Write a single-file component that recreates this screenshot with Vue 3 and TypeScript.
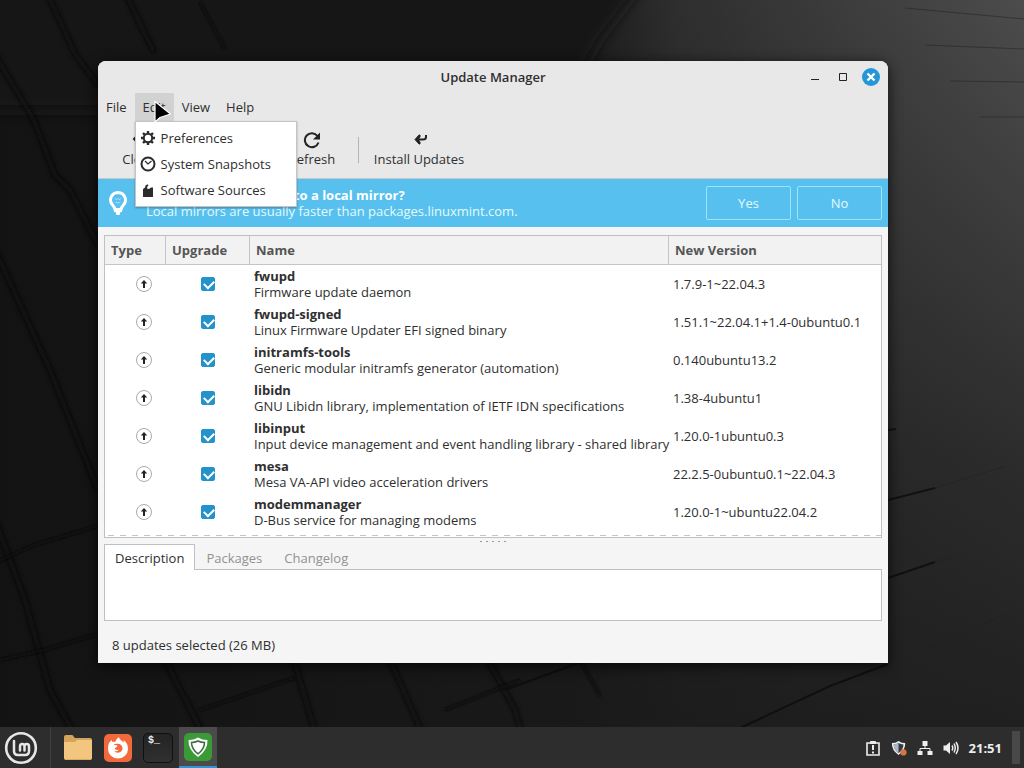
<script setup lang="ts">
import { computed, ref } from 'vue'

interface Update {
  name: string
  summary: string
  version: string
  selected: boolean
}

const updates = ref<Update[]>([
  { name: 'fwupd', summary: 'Firmware update daemon', version: '1.7.9-1~22.04.3', selected: true },
  { name: 'fwupd-signed', summary: 'Linux Firmware Updater EFI signed binary', version: '1.51.1~22.04.1+1.4-0ubuntu0.1', selected: true },
  { name: 'initramfs-tools', summary: 'Generic modular initramfs generator (automation)', version: '0.140ubuntu13.2', selected: true },
  { name: 'libidn', summary: 'GNU Libidn library, implementation of IETF IDN specifications', version: '1.38-4ubuntu1', selected: true },
  { name: 'libinput', summary: 'Input device management and event handling library - shared library', version: '1.20.0-1ubuntu0.3', selected: true },
  { name: 'mesa', summary: 'Mesa VA-API video acceleration drivers', version: '22.2.5-0ubuntu0.1~22.04.3', selected: true },
  { name: 'modemmanager', summary: 'D-Bus service for managing modems', version: '1.20.0-1~ubuntu22.04.2', selected: true },
])

const belowFold = 1
const selectedCount = computed(() => updates.value.filter((u) => u.selected).length + belowFold)

const menus = ['File', 'Edit', 'View', 'Help']
const openMenu = ref('Edit')
const tabs = ['Description', 'Packages', 'Changelog']
const activeTab = ref('Description')

function toggleMenu(menu: string) {
  openMenu.value = openMenu.value === menu ? '' : menu
}

function setAll(value: boolean) {
  updates.value.forEach((u) => (u.selected = value))
}
</script>

<template>
  <div class="desktop">
    <svg class="wallpaper" viewBox="0 0 1024 768" preserveAspectRatio="xMidYMid slice" aria-hidden="true">
      <defs>
        <linearGradient id="wall-right" x1="0" y1="0" x2="0" y2="1">
          <stop offset="0" stop-color="#4c4c4c" />
          <stop offset="0.3" stop-color="#3c3c3c" />
          <stop offset="0.6" stop-color="#2c2c2c" />
          <stop offset="1" stop-color="#1e1e1e" />
        </linearGradient>
        <linearGradient id="wall-fade" x1="0" y1="0" x2="1" y2="0">
          <stop offset="0" stop-color="#131313" />
          <stop offset="0.56" stop-color="#191919" />
          <stop offset="0.66" stop-color="#1a1a1a" stop-opacity="0.6" />
          <stop offset="1" stop-color="#1a1a1a" stop-opacity="0" />
        </linearGradient>
        <filter id="soft"><feGaussianBlur stdDeviation="2" /></filter>
        <filter id="fine"><feGaussianBlur stdDeviation="1" /></filter>
        <filter id="softer"><feGaussianBlur stdDeviation="7" /></filter>
      </defs>
      <rect width="1024" height="768" fill="url(#wall-right)" />
      <rect width="1024" height="768" fill="url(#wall-fade)" />
      <path d="M-20 -20H646L600 40L560 110H-20Z" fill="#191919" filter="url(#softer)" />
      <g fill="none" stroke="#070707" stroke-width="5" opacity=".8" filter="url(#soft)">
        <path d="M48 -5L75 54L98 85M126 -5L154 52M-5 55L33 118L55 175L70 190L98 245M-5 250L50 370L98 490" />
        <path d="M-5 520L25 600L50 690L72 730M165 660L200 728M294 660L314 728M390 660L420 728M488 660L515 710L520 728" />
      </g>
      <g fill="none" stroke="#080808" stroke-width="3" opacity=".75" filter="url(#fine)">
        <path d="M200 2L225 49M-5 563L34 545L98 526M0 660L44 650L98 634M200 710L294 678M445 710L520 680M580 660L600 696" />
      </g>
      <g fill="none" stroke="#0b0b0b" stroke-width="2" opacity=".75">
        <path d="M505 690L600 655M740 728L830 686L888 664M888 500L935 488M888 578L935 562M888 430L896 429" />
      </g>
      <g fill="none" stroke="#202020" stroke-width="1" opacity=".5">
        <path d="M905 8L1024 19M925 45L1024 49M950 81L1024 82M980 117H1024M888 664L935 645L1006 614M935 488L1006 466M935 562L955 556M976 713L1006 702" />
      </g>
    </svg>

    <main class="workspace">
      <section class="window" aria-label="Update Manager">
        <header class="titlebar">
          <h1>Update Manager</h1>
          <div class="window-controls">
            <button type="button" aria-label="Minimize">
              <svg width="18" height="18" viewBox="0 0 18 18"><path d="M5 11.500H13" stroke="#222" fill="none" /></svg>
            </button>
            <button type="button" aria-label="Maximize">
              <svg width="18" height="18" viewBox="0 0 18 18"><path d="M5.500 5.500H12.500V12.500H5.500Z" stroke="#222" fill="none" /></svg>
            </button>
            <button type="button" aria-label="Close">
              <svg width="18" height="18" viewBox="0 0 18 18">
                <circle cx="9" cy="9" r="9" fill="#2497d8" />
                <path d="M5.500 5.500L12.500 12.500M12.500 5.500L5.500 12.500" stroke="#fff" stroke-width="2.400" />
              </svg>
            </button>
          </div>
        </header>

        <nav class="menubar" aria-label="Menu bar">
          <div v-for="menu in menus" :key="menu" class="menu">
            <button type="button" :class="{ open: openMenu === menu }" :aria-expanded="openMenu === menu" @click="toggleMenu(menu)">
              {{ menu }}
            </button>
            <div v-if="menu === 'Edit' && openMenu === 'Edit'" class="dropdown" role="menu">
              <button type="button" role="menuitem">
                <svg width="16" height="16" viewBox="0 0 16 16" aria-hidden="true">
                  <circle cx="8" cy="8" r="4.200" fill="none" stroke="#2b2b2b" stroke-width="2" />
                  <path d="M8 1V4M8 12V15M1 8H4M12 8H15M3 3L5.200 5.200M10.800 10.800L13 13M13 3L10.800 5.200M5.200 10.800L3 13" stroke="#2b2b2b" stroke-width="2.400" />
                </svg>
                Preferences
              </button>
              <button type="button" role="menuitem">
                <svg width="16" height="16" viewBox="0 0 16 16" aria-hidden="true">
                  <circle cx="8" cy="8" r="6.500" fill="none" stroke="#2b2b2b" stroke-width="2" />
                  <path d="M5 5L8 8L11.500 5" fill="none" stroke="#2b2b2b" stroke-width="1.200" />
                </svg>
                System Snapshots
              </button>
              <button type="button" role="menuitem">
                <svg width="16" height="16" viewBox="0 0 16 16" aria-hidden="true">
                  <path d="M3 7L5 5.500Q5 3 7.500 2.200L8.500 3.500Q7 4 7 6.500L9 7L11 5.500H13V14.500Q13 15 12.500 15H3.500Q3 15 3 14.500Z" fill="#2b2b2b" />
                </svg>
                Software Sources
              </button>
            </div>
            <svg v-if="menu === 'Edit'" class="cursor" width="18" height="24" viewBox="0 0 18 24" aria-hidden="true">
              <path d="M1 1.500V22L6 17.500L16.500 14Z" fill="#000" stroke="#fff" stroke-width="1.200" stroke-linejoin="round" />
            </svg>
          </div>
        </nav>

        <div class="toolbar" role="toolbar">
          <button type="button" class="tool clear" @click="setAll(false)">
            <svg width="18" height="18" viewBox="0 0 18 18" aria-hidden="true"><path d="M5 8H14V14M8 5L5 8L8 11" fill="none" stroke="#222" stroke-width="2" /></svg>
            Clear
          </button>
          <button type="button" class="tool select" @click="setAll(true)">
            <svg width="18" height="18" viewBox="0 0 18 18" aria-hidden="true"><path d="M3 9L7 13L15 4" fill="none" stroke="#222" stroke-width="2" /></svg>
            Select All
          </button>
          <button type="button" class="tool refresh">
            <svg width="18" height="18" viewBox="0 0 18 18" aria-hidden="true">
              <path d="M14.500 5A7 7 0 1 0 15.500 11.500" fill="none" stroke="#222" stroke-width="2" />
              <path d="M17 1.500V8.500H10Z" fill="#222" />
            </svg>
            Refresh
          </button>
          <span class="tool-separator"></span>
          <button type="button" class="tool install">
            <svg width="18" height="18" viewBox="0 0 18 18" aria-hidden="true">
              <path d="M16 4V6Q16 8.500 13 8.500H8" fill="none" stroke="#222" stroke-width="2" />
              <path d="M10 4V6L8 8.500L10 11V13H9L5 8.500L9 4Z" fill="#222" stroke="#222" stroke-linejoin="round" />
            </svg>
            Install Updates
          </button>
        </div>

        <div class="infobar" role="status">
          <svg class="bulb" width="20" height="26" viewBox="0 0 20 26" aria-hidden="true">
            <path d="M10 2.500A7.500 7.500 0 0 0 5 15.500Q6.500 17 7 19.500H13Q13.500 17 15 15.500A7.500 7.500 0 0 0 10 2.500Z" fill="none" stroke="#fff" stroke-width="3" />
            <path d="M6 19H14V22H12.500L11.500 25H8.500L7.500 22H6Z" fill="#fff" />
            <path d="M7 8Q8 11 10 8.500Q12 11 13 8M7.500 12Q10 14 12.500 12" fill="none" stroke="#fff" opacity=".5" />
          </svg>
          <div class="info-text">
            <strong>Do you want to switch to a local mirror?</strong>
            <span>Local mirrors are usually faster than packages.linuxmint.com.</span>
          </div>
          <button type="button" class="answer">Yes</button>
          <button type="button" class="answer">No</button>
        </div>

        <div class="content">
          <div class="list">
            <table>
              <colgroup>
                <col class="col-type" />
                <col class="col-upgrade" />
                <col />
                <col class="col-version" />
              </colgroup>
              <thead>
                <tr>
                  <th scope="col">Type</th>
                  <th scope="col">Upgrade</th>
                  <th scope="col">Name</th>
                  <th scope="col">New Version</th>
                </tr>
              </thead>
              <tbody>
                <tr v-for="update in updates" :key="update.name">
                  <td class="type">
                    <svg width="16" height="16" viewBox="0 0 16 16" role="img" aria-label="Package update">
                      <circle cx="8" cy="8" r="7.500" fill="#fff" stroke="#aaa" />
                      <path d="M8 12V6" stroke="#222" stroke-width="2" />
                      <path d="M4.800 7.500L8 4L11.200 7.500Z" fill="#222" />
                    </svg>
                  </td>
                  <td class="upgrade">
                    <input v-model="update.selected" type="checkbox" :aria-label="'Upgrade ' + update.name" />
                  </td>
                  <td class="name">
                    <strong>{{ update.name }}</strong>
                    <span>{{ update.summary }}</span>
                  </td>
                  <td class="version">{{ update.version }}</td>
                </tr>
              </tbody>
            </table>
            <div class="more"></div>
          </div>

          <div class="splitter"><i v-for="n in 5" :key="n"></i></div>

          <div class="tabs" role="tablist">
            <button v-for="tab in tabs" :key="tab" type="button" role="tab" :aria-selected="activeTab === tab" :class="{ active: activeTab === tab }" @click="activeTab = tab">
              {{ tab }}
            </button>
          </div>
          <div class="panel" role="tabpanel"></div>
        </div>

        <footer class="statusbar">{{ selectedCount }} updates selected (26 MB)</footer>
      </section>
    </main>

    <footer class="taskbar">
      <button type="button" class="start" aria-label="Menu">
        <svg width="34" height="34" viewBox="0 0 34 34" fill="none" stroke="#e6e6e6" aria-hidden="true">
          <circle cx="17" cy="17" r="14.800" stroke-width="2.600" />
          <path d="M10 10V20Q10 24 14 24H21Q25 24 25 20V15.500Q25 13 22.800 13Q20.500 13 20.500 15.500V19.500M20.500 15.500Q20.500 13 18.200 13Q16 13 16 15.500V19.500" stroke-width="2.500" stroke-linecap="round" />
        </svg>
      </button>
      <div class="launchers">
        <button type="button" aria-label="Files">
          <svg width="30" height="30" viewBox="0 0 30 30">
            <path d="M1 4Q1 2 3 2H9Q10 2 11 4L12 5H27Q29 5 29 7V12H1Z" fill="#d3a45c" />
            <path d="M1 9H12L14 7H29V25Q29 27 27 27H3Q1 27 1 25Z" fill="#f2c67e" />
            <path d="M2 26.500H28" stroke="#d9ab60" />
          </svg>
        </button>
        <button type="button" aria-label="Firefox">
          <svg width="30" height="30" viewBox="0 0 30 30">
            <rect x="1" y="1" width="28" height="28" rx="5" fill="#f2693c" />
            <path d="M6 10L8.500 7L9.500 9Q11 8.500 12 9Q13 6 16 4Q16 6.500 19 8L20.500 9.500Q21 8 20.500 7Q25 10 25 16A10 9.500 0 0 1 5 16Q5 12.500 6 10Z" fill="#fff" />
            <path d="M10.500 12L14 12.300Q15 13 13.500 14.200Q11.500 14.500 12 16Q13.500 17.800 16 16.500Q14.500 19.300 11 17.800Q13.500 21 17.500 19Q21 16 18.500 12.500Q17 10.500 15 10.800Q12 10.500 10.500 12Z" fill="#f2693c" />
          </svg>
        </button>
        <button type="button" class="terminal" aria-label="Terminal">
          <span>$_</span>
        </button>
        <button type="button" class="running" aria-label="Update Manager">
          <svg width="30" height="30" viewBox="0 0 30 30">
            <rect x="1" y="1" width="28" height="28" rx="5" fill="#3a9b36" />
            <path d="M15 5.500Q19 8 24.500 8Q25 18 15 25Q5 18 5.500 8Q11 8 15 5.500Z" fill="#fff" />
            <path d="M15 9Q18 10.500 21.500 10.500Q21.500 17 15 21.800Q8.500 17 8.500 10.500Q12 10.500 15 9Z" fill="#fff" stroke="#3f6b42" stroke-width="1.500" />
          </svg>
        </button>
      </div>
      <div class="tray">
        <svg width="16" height="16" viewBox="0 0 16 16" fill="none" stroke="#eee" aria-hidden="true">
          <path d="M2 3H14V15H2Z" stroke-width="1.600" />
          <path d="M5.500 1.500H10.500V3.500H5.500Z" fill="#eee" />
          <path d="M8 5V10M8 11.500V13.500" stroke-width="2" />
        </svg>
        <svg width="16" height="16" viewBox="0 0 18 18" aria-hidden="true">
          <path d="M8.500 1Q12 3.500 16 3.500Q16.500 11.500 8.500 17Q0.500 11.500 1 3.500Q5 3.500 8.500 1Z" fill="#eee" />
          <path d="M8.500 3.500Q11 5 14 5.200Q14 11 8.500 15Q3 11 3 5.200Q6 5 8.500 3.500Z" fill="#333a45" />
          <path d="M8.500 3.500V15Q3 11 3 5.200Q6 5 8.500 3.500Z" fill="#a9b8c8" />
          <circle cx="14" cy="14" r="3.500" fill="#d8743f" />
        </svg>
        <svg width="16" height="16" viewBox="0 0 16 16" aria-hidden="true">
          <path d="M5.500 1H10.500V6H5.500ZM0.500 11H5.500V15H0.500ZM10.500 11H15.500V15H10.500Z" fill="#eee" />
          <path d="M8 6V8.500M3 11V8.500H13V11" fill="none" stroke="#eee" />
        </svg>
        <svg width="16" height="16" viewBox="0 0 16 16" aria-hidden="true">
          <path d="M0.500 5.500H3L7 2V14L3 10.500H0.500Z" fill="#eee" />
          <path d="M9 5.500Q10.500 8 9 10.500M11 3.500Q13.500 8 11 12.500M13 2Q17 8 13 14" fill="none" stroke="#eee" stroke-width="1.500" />
        </svg>
        <time>21:51</time>
        <button type="button" class="show-desktop" aria-label="Show desktop"></button>
      </div>
    </footer>
  </div>
</template>

<style>
body {
  margin: 0;
  background: #181818;
}
</style>

<style scoped>
.desktop {
  position: relative;
  display: flex;
  flex-direction: column;
  min-height: 100vh;
  color: #2f2f2f;
  font-family: "Open Sans", "Noto Sans", sans-serif;
  font-size: 13px;
  line-height: 16px;
}

.desktop *,
.desktop {
  box-sizing: border-box;
}

button {
  padding: 0;
  border: 0;
  background: none;
  color: inherit;
  font: inherit;
}

svg {
  display: block;
  flex: none;
}

.wallpaper {
  position: absolute;
  inset: 0;
  width: 100%;
  height: 100%;
}

.workspace {
  position: relative;
  display: flex;
  flex: 1;
  padding: 61px 136px 64px 98px;
}

.window {
  display: flex;
  flex: 1;
  flex-direction: column;
  min-width: 0;
  border-radius: 8px 8px 0 0;
  background: #f5f5f5;
  box-shadow: 0 3px 14px rgba(0, 0, 0, 0.75);
}

.titlebar {
  display: grid;
  grid-template-columns: 1fr auto 1fr;
  align-items: center;
  height: 32px;
  padding: 0 8px;
  border-radius: 8px 8px 0 0;
  background: #e8e8e8;
}

.titlebar h1 {
  grid-column: 2;
  margin: 0;
  font-size: 13px;
  font-weight: 600;
}

.window-controls {
  display: flex;
  justify-content: flex-end;
  gap: 10px;
}

.menubar {
  display: flex;
  height: 28px;
  background: #e8e8e8;
}

.menu {
  position: relative;
}

.menu > button {
  height: 28px;
  padding: 0 8px;
}

.menu > button.open {
  background: #d2d2d2;
}

.dropdown {
  position: absolute;
  z-index: 2;
  top: 28px;
  left: 0;
  width: 162px;
  padding: 3px 0;
  border: 1px solid #c4c4c4;
  background: #fff;
  box-shadow: 0 1px 2px rgba(0, 0, 0, 0.3);
}

.dropdown button {
  display: flex;
  align-items: center;
  gap: 5px;
  width: 100%;
  height: 26px;
  padding: 0 4px;
  white-space: nowrap;
}

.cursor {
  position: absolute;
  z-index: 3;
  top: 7px;
  left: 19px;
  pointer-events: none;
}

.toolbar {
  display: flex;
  align-items: center;
  height: 58px;
  padding: 0 8px;
  border-bottom: 1px solid #c9c9c9;
  background: #e8e8e8;
}

.tool {
  display: flex;
  flex-direction: column;
  align-items: center;
  gap: 2px;
  padding-bottom: 2px;
  white-space: nowrap;
}

.clear {
  width: 64px;
}

.select {
  width: 104px;
}

.refresh {
  width: 76px;
}

.tool-separator {
  width: 1px;
  height: 26px;
  margin-left: 8px;
  background: #b5b5b5;
}

.install {
  width: 120px;
}

.infobar {
  display: flex;
  align-items: center;
  gap: 6px;
  height: 48px;
  padding: 0 6px 0 10px;
  background: #57c0ee;
  color: #fff;
}

.info-text {
  display: flex;
  flex: 1;
  flex-direction: column;
  padding-left: 12px;
}

.info-text span {
  color: #e4fbff;
}

.answer {
  width: 85px;
  height: 34px;
  border: 1px solid #9ce4f8;
  border-radius: 2px;
  color: #e4fbff;
}

.content {
  display: flex;
  flex: 1;
  flex-direction: column;
  padding: 8px 6px 0;
}

.list {
  border: 1px solid #bfc0c4;
  background: #fff;
}

table {
  width: 100%;
  border-collapse: separate;
  border-spacing: 0;
  table-layout: fixed;
}

.col-type {
  width: 61px;
}

.col-upgrade {
  width: 84px;
}

.col-version {
  width: 212px;
}

th {
  height: 29px;
  padding: 0 6px;
  border-right: 1px solid #c4c5c9;
  border-bottom: 1px solid #c4c5c9;
  background: #f2f2f2;
  color: #555;
  font-weight: 700;
  text-align: left;
}

th:last-child {
  border-right: 0;
}

td {
  height: 38px;
  padding: 0 4px;
  white-space: nowrap;
}

.type svg {
  margin-left: 27px;
}

.upgrade {
  text-align: center;
}

.upgrade input {
  display: block;
  width: 14px;
  height: 14px;
  margin: 0 auto;
  border: 1px solid #2492cb;
  border-radius: 2px;
  background: #fff;
  appearance: none;
}

.upgrade input:checked {
  background: #2492cb;
}

.upgrade input:checked::before {
  display: block;
  width: 8px;
  height: 5px;
  margin: 2px;
  border-bottom: 2px solid #fff;
  border-left: 2px solid #fff;
  content: "";
  transform: rotate(-45deg);
}

.name strong,
.name span {
  display: block;
}

.more {
  height: 6px;
  background: repeating-linear-gradient(90deg, transparent 0 3px, #c4c4c4 3px 9px, transparent 9px 12px) 0 4px / 100% 1px no-repeat;
}

.splitter {
  display: flex;
  align-items: center;
  justify-content: center;
  gap: 4px;
  height: 6px;
}

.splitter i {
  width: 2px;
  height: 1px;
  background: #999;
}

.tabs {
  display: flex;
  height: 25px;
}

.tabs button {
  height: 26px;
  padding: 0 10px;
  border: 1px solid transparent;
  border-bottom: 0;
  color: #929292;
}

.tabs .active {
  z-index: 1;
  border-color: #bfc0c4;
  background: #fff;
  color: #2f2f2f;
}

.panel {
  flex: 1;
  min-height: 51px;
  border: 1px solid #bfc0c4;
  background: #fff;
}

.statusbar {
  padding: 16px 14px 10px;
}

.taskbar {
  position: relative;
  display: flex;
  height: 41px;
  background: #2d2d2e;
  color: #eee;
}

.start {
  width: 51px;
  padding-left: 4px;
  border-right: 1px solid #404040;
}

.launchers {
  display: flex;
  flex: 1;
  gap: 2px;
  padding-left: 8px;
}

.launchers button {
  display: flex;
  align-items: center;
  justify-content: center;
  width: 38px;
}

.terminal span {
  width: 30px;
  height: 30px;
  padding: 1px 4px;
  border: 1px solid #101010;
  border-radius: 5px;
  background: linear-gradient(#242424, #303030);
  font: bold 10px/12px "Liberation Mono", monospace;
  text-align: left;
}

.launchers .running {
  border-bottom: 2px solid #2f93d8;
  background: #4b4b4c;
}

.tray {
  display: flex;
  align-items: center;
  gap: 10px;
}

time {
  font-weight: 700;
}

.show-desktop {
  width: 8px;
  height: 33px;
  margin-right: 4px;
  background: #484848;
}
</style>
